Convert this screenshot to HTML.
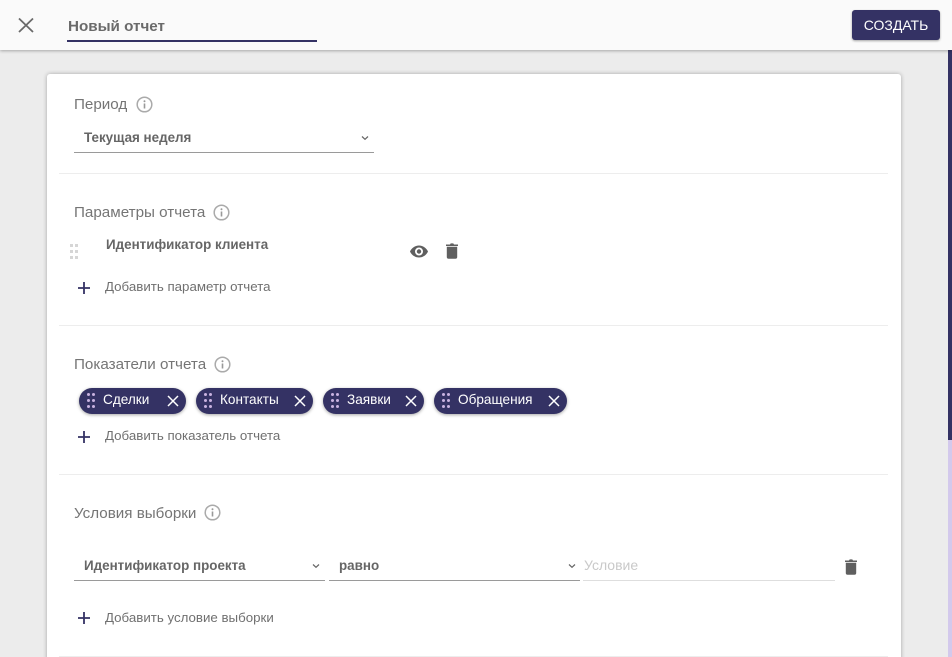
<!DOCTYPE html>
<html lang="ru"><head><meta charset="utf-8"><style>
html,body{margin:0;padding:0;width:952px;height:657px;overflow:hidden;background:#ececec}
body{position:relative;font-family:"Liberation Sans",sans-serif}
.a{position:absolute;white-space:nowrap}
.t{position:absolute;white-space:nowrap;line-height:20px;height:20px}
.h{font-size:15.2px;color:#757575}
.b{font-size:13.4px;font-weight:bold;color:#666}
.l{font-size:13.3px;color:#707070}
.hr{position:absolute;left:59px;width:829px;height:1px;background:#ededed}
.line{position:absolute;height:1px;background:#9a9a9a}
svg{position:absolute;display:block;overflow:visible}
.chip{position:absolute;top:388px;height:26px;border-radius:13px;background:#343264;box-shadow:0 1px 3px rgba(0,0,0,.35)}
.chip span{position:absolute;top:2px;line-height:20px;font-size:13.6px;color:#fff;white-space:nowrap}
</style></head><body>
<div class="a" style="left:948px;top:50px;width:4px;height:390px;background:#343264"></div>
<div class="a" style="left:948px;top:440px;width:4px;height:217px;background:#d3c9ec"></div>
<div class="a" style="left:47px;top:74px;width:854px;height:600px;background:#fff;border-radius:3px;box-shadow:0 0 4px rgba(0,0,0,.3)"></div>
<div class="a" style="left:0;top:0;width:952px;height:50px;background:#fafafa;box-shadow:0 1px 3px rgba(0,0,0,.3)"></div>
<svg style="left:0;top:0" width="60" height="50"><path d="M19 18.500L33 32M33 18.500L19 32" stroke="#6a6a6a" stroke-width="1.800" fill="none"/></svg>
<div class="t" style="left:68px;top:17px;font-size:15.2px;font-weight:bold;color:#6a6a6a">Новый отчет</div>
<div class="a" style="left:67px;top:40px;width:250px;height:2px;background:#343264"></div>
<div class="a" style="left:852px;top:10px;width:88px;height:30px;border-radius:3px;background:#343264;box-shadow:0 1px 2px rgba(0,0,0,.35);color:#fff;font-size:14px;line-height:30px;text-align:center">СОЗДАТЬ</div>

<div class="t h" style="left:74px;top:95px">Период</div>
<svg style="left:136px;top:96px" width="17" height="17"><circle cx="8.500" cy="8.500" r="7.300" fill="none" stroke="#aaa" stroke-width="1.500"/><path d="M8.500 7.500V12.500" stroke="#999" stroke-width="1.600"/><circle cx="8.500" cy="5.300" r="1" fill="#999"/></svg>
<div class="t b" style="left:84px;top:128px">Текущая неделя</div>
<svg style="left:361px;top:135px" width="8" height="6"><path d="M1 1.500L4 4.300L7 1.500" fill="none" stroke="#666" stroke-width="1.200"/></svg>
<div class="line" style="left:74px;top:152px;width:300px"></div>
<div class="hr" style="top:173px"></div>

<div class="t h" style="left:74px;top:203px">Параметры отчета</div>
<svg style="left:213px;top:204px" width="17" height="17"><circle cx="8.500" cy="8.500" r="7.300" fill="none" stroke="#aaa" stroke-width="1.500"/><path d="M8.500 7.500V12.500" stroke="#999" stroke-width="1.600"/><circle cx="8.500" cy="5.300" r="1" fill="#999"/></svg>
<svg style="left:70px;top:244px" width="8" height="16" fill="#d6d6d6"><rect width="3" height="3"/><rect x="5" width="3" height="3"/><rect y="6" width="3" height="3"/><rect x="5" y="6" width="3" height="3"/><rect y="12" width="3" height="3"/><rect x="5" y="12" width="3" height="3"/></svg>
<div class="t b" style="left:106px;top:235px">Идентификатор клиента</div>
<svg style="left:410px;top:245px" width="18" height="13"><path fill-rule="evenodd" fill="#5f5f5f" d="M9 .5C5 .5 1.600 3 0 6.500C1.600 10 5 12.500 9 12.500S16.400 10 18 6.500C16.400 3 13 .5 9 .5ZM9 10.500A4 4 0 1 1 9 2.500A4 4 0 0 1 9 10.500ZM9 4.300A2.200 2.200 0 1 0 9 8.700A2.200 2.200 0 0 0 9 4.300Z"/></svg>
<svg style="left:446px;top:243px" width="12" height="16"><path fill="#5f5f5f" d="M0 1.500H4L4.700 .4H7.300L8 1.500H12V3H0ZM.8 3.800H11.200V14A1.700 1.700 0 0 1 9.500 15.700H2.500A1.700 1.700 0 0 1 .8 14Z"/></svg>
<svg style="left:78px;top:282px" width="12" height="12"><path d="M6 0V12M0 6H12" stroke="#343264" stroke-width="1.800"/></svg>
<div class="t l" style="left:105px;top:277px">Добавить параметр отчета</div>
<div class="hr" style="top:325px"></div>

<div class="t h" style="left:74px;top:355px">Показатели отчета</div>
<svg style="left:214px;top:356px" width="17" height="17"><circle cx="8.500" cy="8.500" r="7.300" fill="none" stroke="#aaa" stroke-width="1.500"/><path d="M8.500 7.500V12.500" stroke="#999" stroke-width="1.600"/><circle cx="8.500" cy="5.300" r="1" fill="#999"/></svg>

<div class="chip" style="left:79px;width:107px"><svg style="left:8px;top:5px" width="8" height="15" fill="#c9b3e0"><circle cx="1.500" cy="1.500" r="1.500"/><circle cx="6.500" cy="1.500" r="1.500"/><circle cx="1.500" cy="7.500" r="1.500"/><circle cx="6.500" cy="7.500" r="1.500"/><circle cx="1.500" cy="13.500" r="1.500"/><circle cx="6.500" cy="13.500" r="1.500"/></svg><span style="left:24px">Сделки</span><svg style="left:88px;top:7px" width="12" height="12"><path d="M1 1L11 11M11 1L1 11" stroke="#fff" stroke-width="1.500"/></svg></div>
<div class="chip" style="left:196px;width:117px"><svg style="left:8px;top:5px" width="8" height="15" fill="#c9b3e0"><circle cx="1.500" cy="1.500" r="1.500"/><circle cx="6.500" cy="1.500" r="1.500"/><circle cx="1.500" cy="7.500" r="1.500"/><circle cx="6.500" cy="7.500" r="1.500"/><circle cx="1.500" cy="13.500" r="1.500"/><circle cx="6.500" cy="13.500" r="1.500"/></svg><span style="left:24px">Контакты</span><svg style="left:98px;top:7px" width="12" height="12"><path d="M1 1L11 11M11 1L1 11" stroke="#fff" stroke-width="1.500"/></svg></div>
<div class="chip" style="left:323px;width:101px"><svg style="left:8px;top:5px" width="8" height="15" fill="#c9b3e0"><circle cx="1.500" cy="1.500" r="1.500"/><circle cx="6.500" cy="1.500" r="1.500"/><circle cx="1.500" cy="7.500" r="1.500"/><circle cx="6.500" cy="7.500" r="1.500"/><circle cx="1.500" cy="13.500" r="1.500"/><circle cx="6.500" cy="13.500" r="1.500"/></svg><span style="left:24px">Заявки</span><svg style="left:82px;top:7px" width="12" height="12"><path d="M1 1L11 11M11 1L1 11" stroke="#fff" stroke-width="1.500"/></svg></div>
<div class="chip" style="left:434px;width:133px"><svg style="left:8px;top:5px" width="8" height="15" fill="#c9b3e0"><circle cx="1.500" cy="1.500" r="1.500"/><circle cx="6.500" cy="1.500" r="1.500"/><circle cx="1.500" cy="7.500" r="1.500"/><circle cx="6.500" cy="7.500" r="1.500"/><circle cx="1.500" cy="13.500" r="1.500"/><circle cx="6.500" cy="13.500" r="1.500"/></svg><span style="left:24px">Обращения</span><svg style="left:114px;top:7px" width="12" height="12"><path d="M1 1L11 11M11 1L1 11" stroke="#fff" stroke-width="1.500"/></svg></div>

<svg style="left:78px;top:431px" width="12" height="12"><path d="M6 0V12M0 6H12" stroke="#343264" stroke-width="1.800"/></svg>
<div class="t l" style="left:105px;top:426px">Добавить показатель отчета</div>
<div class="hr" style="top:474px"></div>

<div class="t h" style="left:74px;top:504px">Условия выборки</div>
<svg style="left:204px;top:504px" width="17" height="17"><circle cx="8.500" cy="8.500" r="7.300" fill="none" stroke="#aaa" stroke-width="1.500"/><path d="M8.500 7.500V12.500" stroke="#999" stroke-width="1.600"/><circle cx="8.500" cy="5.300" r="1" fill="#999"/></svg>
<div class="t b" style="left:84px;top:556px">Идентификатор проекта</div>
<svg style="left:312px;top:563px" width="8" height="6"><path d="M1 1.500L4 4.300L7 1.500" fill="none" stroke="#666" stroke-width="1.200"/></svg>
<div class="line" style="left:74px;top:580px;width:251px"></div>
<div class="t b" style="left:339px;top:556px">равно</div>
<svg style="left:568px;top:563px" width="8" height="6"><path d="M1 1.500L4 4.300L7 1.500" fill="none" stroke="#666" stroke-width="1.200"/></svg>
<div class="line" style="left:329px;top:580px;width:251px"></div>
<div class="t" style="left:584px;top:555px;font-size:14px;color:#c9c9c9">Условие</div>
<div class="line" style="left:583px;top:580px;width:252px;background:#dedede"></div>
<svg style="left:845px;top:559px" width="12" height="16"><path fill="#5f5f5f" d="M0 1.500H4L4.700 .4H7.300L8 1.500H12V3H0ZM.8 3.800H11.200V14A1.700 1.700 0 0 1 9.500 15.700H2.500A1.700 1.700 0 0 1 .8 14Z"/></svg>
<svg style="left:78px;top:612px" width="12" height="12"><path d="M6 0V12M0 6H12" stroke="#343264" stroke-width="1.800"/></svg>
<div class="t l" style="left:105px;top:608px">Добавить условие выборки</div>
<div class="hr" style="top:656px"></div>
</body></html>
